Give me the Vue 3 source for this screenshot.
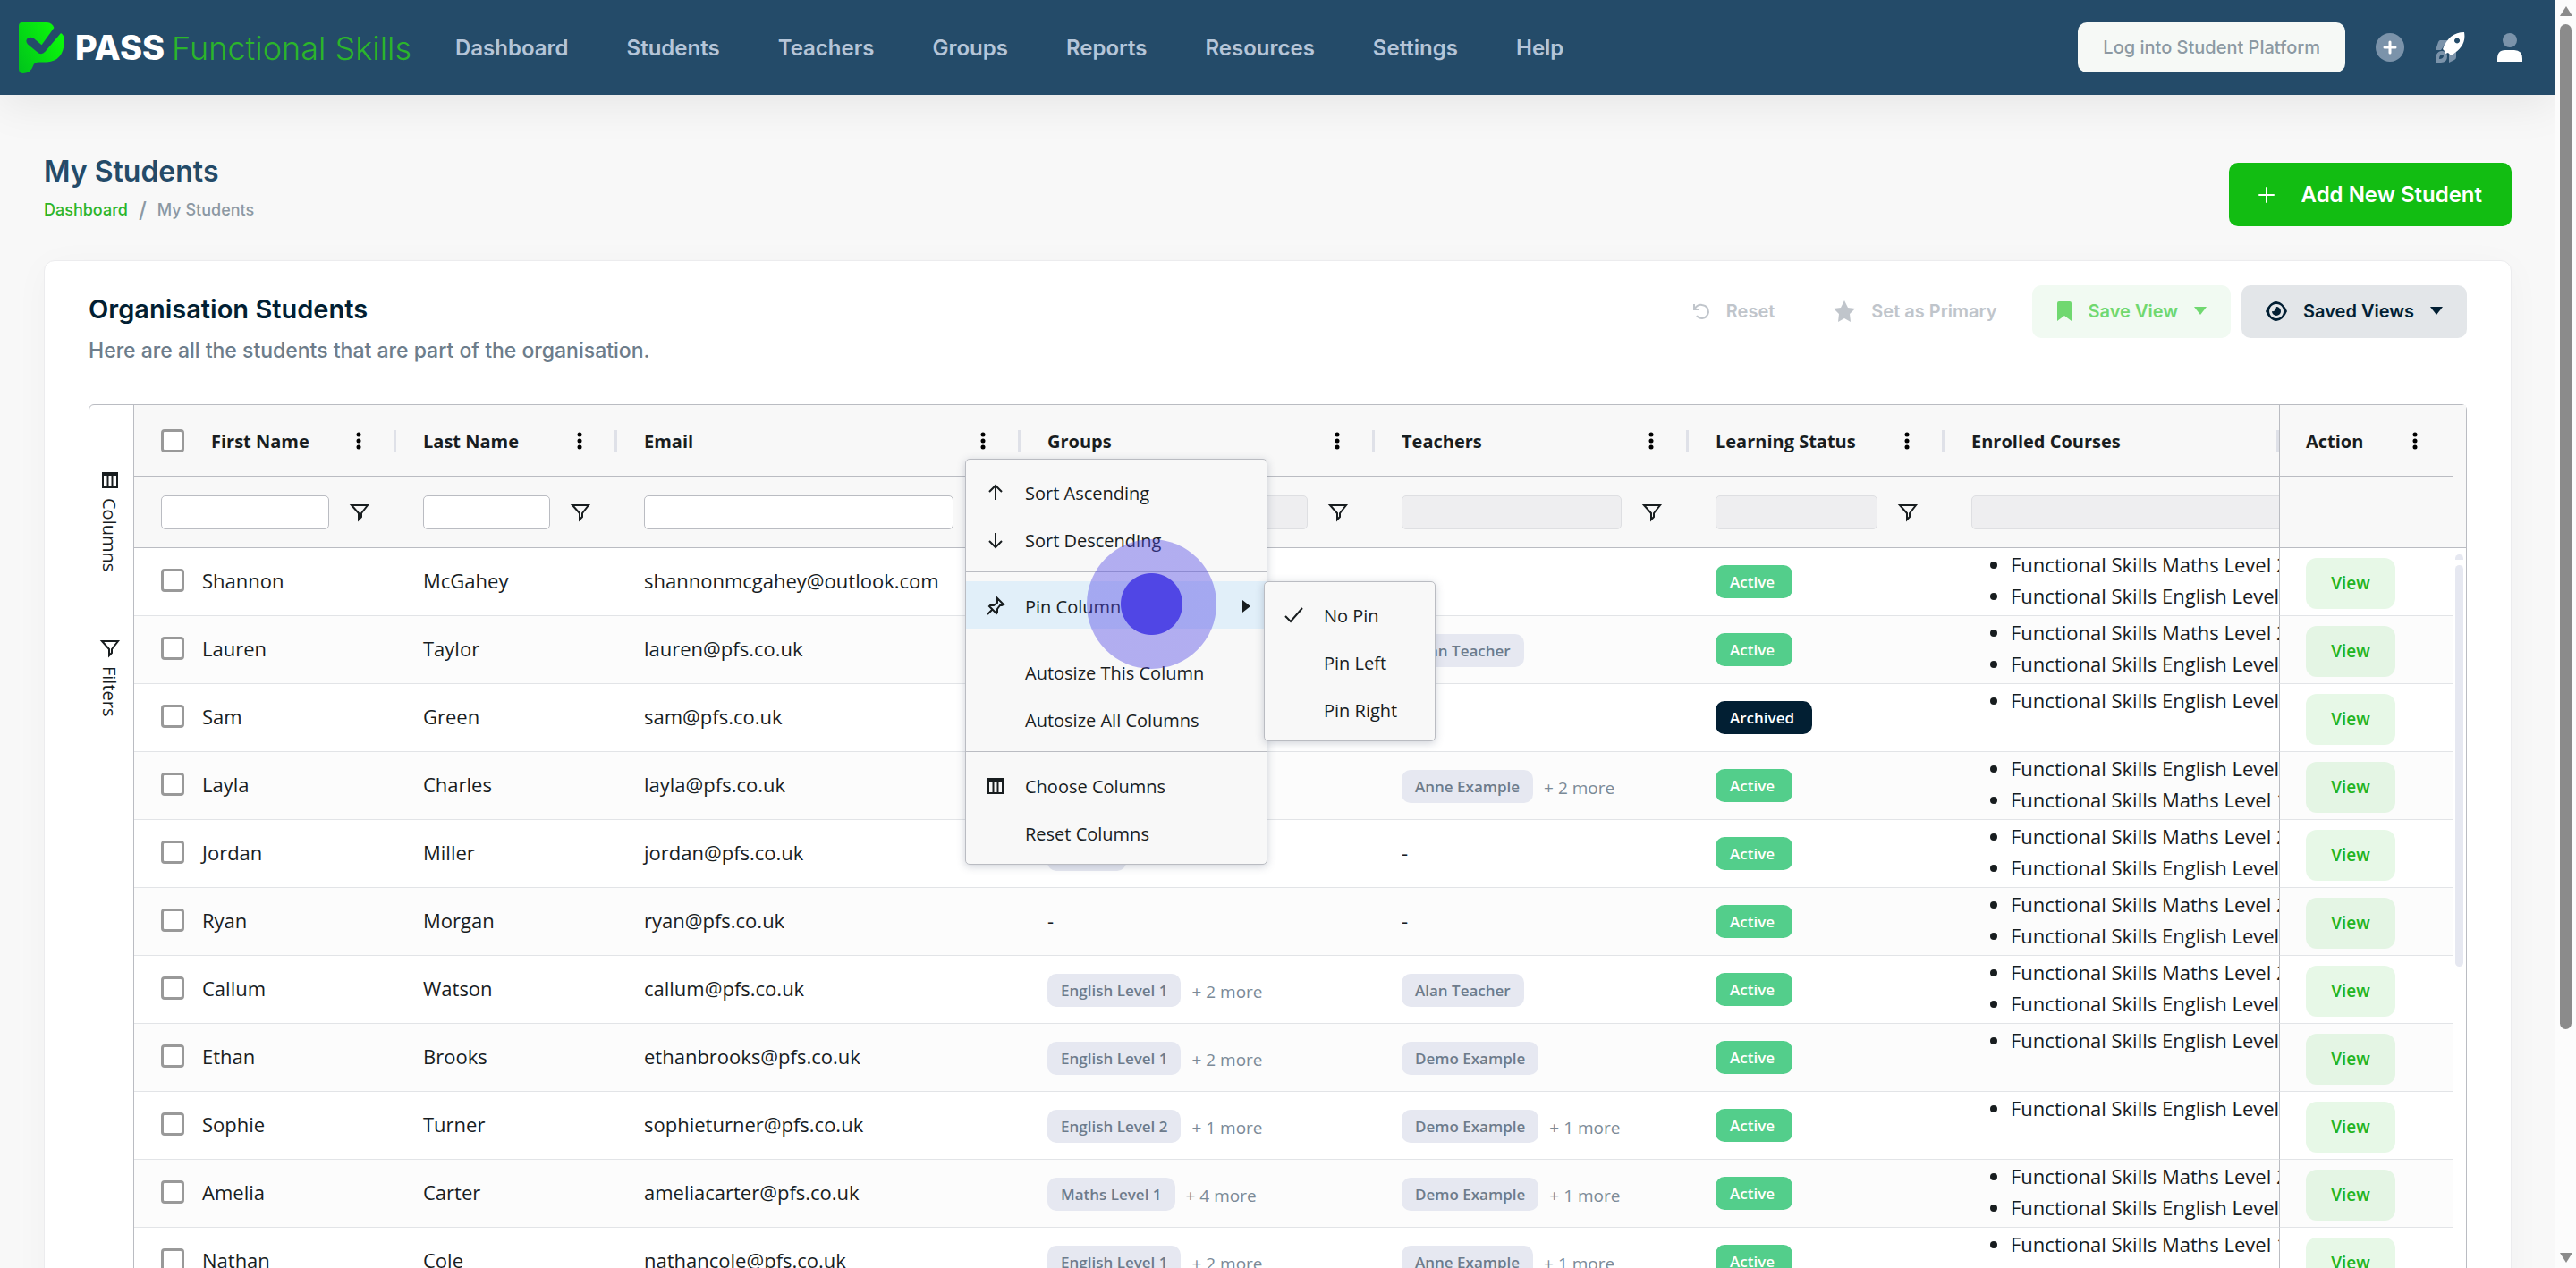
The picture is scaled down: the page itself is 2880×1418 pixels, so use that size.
<script setup>
import { h } from 'vue'

const navItems = ['Dashboard', 'Students', 'Teachers', 'Groups', 'Reports', 'Resources', 'Settings', 'Help']

const columns = [
  { key: 'first', label: 'First Name', filter: 'text', select: true },
  { key: 'last', label: 'Last Name', filter: 'text' },
  { key: 'email', label: 'Email', filter: 'text' },
  { key: 'groups', label: 'Groups', filter: 'set' },
  { key: 'teachers', label: 'Teachers', filter: 'set' },
  { key: 'status', label: 'Learning Status', filter: 'set' },
  { key: 'courses', label: 'Enrolled Courses', filter: 'wide' },
  { key: 'action', label: 'Action', filter: null },
]

const maths2 = 'Functional Skills Maths Level 2'
const maths1 = 'Functional Skills Maths Level 1'
const english = 'Functional Skills English Level 1'

const students = [
  { first: 'Shannon', last: 'McGahey', email: 'shannonmcgahey@outlook.com', group: '', teacher: '', status: 'Active', courses: [maths2, english] },
  { first: 'Lauren', last: 'Taylor', email: 'lauren@pfs.co.uk', group: '', teacher: 'Alan Teacher', status: 'Active', courses: [maths2, english] },
  { first: 'Sam', last: 'Green', email: 'sam@pfs.co.uk', group: '', teacher: '', status: 'Archived', courses: [english] },
  { first: 'Layla', last: 'Charles', email: 'layla@pfs.co.uk', group: '', teacher: 'Anne Example', teacherMore: 2, status: 'Active', courses: [english, maths1] },
  { first: 'Jordan', last: 'Miller', email: 'jordan@pfs.co.uk', group: 'English', teacher: '', status: 'Active', courses: [maths2, english] },
  { first: 'Ryan', last: 'Morgan', email: 'ryan@pfs.co.uk', group: '', teacher: '', status: 'Active', courses: [maths2, english] },
  { first: 'Callum', last: 'Watson', email: 'callum@pfs.co.uk', group: 'English Level 1', groupMore: 2, teacher: 'Alan Teacher', status: 'Active', courses: [maths2, english] },
  { first: 'Ethan', last: 'Brooks', email: 'ethanbrooks@pfs.co.uk', group: 'English Level 1', groupMore: 2, teacher: 'Demo Example', status: 'Active', courses: [english] },
  { first: 'Sophie', last: 'Turner', email: 'sophieturner@pfs.co.uk', group: 'English Level 2', groupMore: 1, teacher: 'Demo Example', teacherMore: 1, status: 'Active', courses: [english] },
  { first: 'Amelia', last: 'Carter', email: 'ameliacarter@pfs.co.uk', group: 'Maths Level 1', groupMore: 4, teacher: 'Demo Example', teacherMore: 1, status: 'Active', courses: [maths2, english] },
  { first: 'Nathan', last: 'Cole', email: 'nathancole@pfs.co.uk', group: 'English Level 1', groupMore: 2, teacher: 'Anne Example', teacherMore: 1, status: 'Active', courses: [maths1] },
]

const menu = [
  [{ label: 'Sort Ascending', icon: 'up' }, { label: 'Sort Descending', icon: 'down' }],
  [{ label: 'Pin Column', icon: 'pin', active: true }],
  [{ label: 'Autosize This Column' }, { label: 'Autosize All Columns' }],
  [{ label: 'Choose Columns', icon: 'columns' }, { label: 'Reset Columns' }],
]

const pinMenu = [{ label: 'No Pin', icon: 'check' }, { label: 'Pin Left' }, { label: 'Pin Right' }]

const iconPaths = {
  up: 'M12 20V4M5 11l7-7 7 7',
  down: 'M12 4v16M5 13l7 7 7-7',
  pin: 'M14 3l7 7-2 1-2 0-3 4 0 4-1 1-8-8 1-1 4 0 4-3 0-2zM9 15l-6 6',
  check: 'M2 13l6 6L21 4',
  columns: 'M4 4h16v16H4zM4 6h16M9.500 5v15M14.500 5v15',
  filter: 'M3 4h18l-7 9v4l-3 3v-7z',
}

const GridIcon = (props) =>
  h('svg', { viewBox: '0 0 24 24', width: 24, height: 24, 'aria-hidden': 'true' }, [
    h('path', { d: iconPaths[props.name], fill: 'none', stroke: 'currentColor', 'stroke-width': 2 }),
  ])
GridIcon.props = ['name']
</script>

<template>
  <div class="shell">
    <div class="page">
      <header class="topbar">
        <a class="brand" href="#">
          <svg class="brand-mark" viewBox="33 44 154 172" aria-hidden="true">
            <defs>
              <linearGradient id="leaf" x1="0" y1="1" x2="1" y2="0.400">
                <stop offset="0" stop-color="#00c21c" />
                <stop offset="1" stop-color="#0bf70b" />
              </linearGradient>
            </defs>
            <path
              fill="url(#leaf)"
              d="M44 44H128Q146 45 152 62L110 120L84 98Q72 91 62 98Q54 107 63 118L100 148Q112 154 122 143L175 80Q188 88 187 108Q184 174 128 178H98Q84 179 81 192Q74 214 48 216Q33 216 33 200V56Q33 44 44 44Z"
            />
          </svg>
          <span class="brand-name"><strong>PASS</strong><span>Functional Skills</span></span>
        </a>
        <nav class="nav">
          <a v-for="item in navItems" :key="item" href="#">{{ item }}</a>
        </nav>
        <div class="tools">
          <button class="login" type="button">Log into Student Platform</button>
          <button class="tool" type="button" aria-label="Add">
            <svg viewBox="0 0 34 34" width="34" height="34">
              <circle cx="17" cy="17" r="16" fill="#7b93aa" />
              <path d="M17 11v12M11 17h12" stroke="#fff" stroke-width="3" stroke-linecap="round" />
            </svg>
          </button>
          <button class="tool" type="button" aria-label="Launch">
            <svg viewBox="0 0 34 34" width="34" height="34">
              <path d="M6 9h9L7 20H1L4 11q1-2 2-2zM24 20v8q0 2-2 3l-6 3v-8z" fill="#7b93aa" />
              <path d="M2 25q2-4 6-4 6 0 6 6 0 7-7 7H1q0-6 1-9zM9 25q-4 0-4 5 5 0 5-4z" fill="#7b93aa" fill-rule="evenodd" />
              <path d="M9 19Q16 0 33 0Q36 16 18 26L15 23L12 24L11 21ZM25 6.500a3 3 0 1 0 .1 0z" fill="#fff" fill-rule="evenodd" />
            </svg>
          </button>
          <button class="tool" type="button" aria-label="Account">
            <svg viewBox="0 0 34 34" width="34" height="34">
              <circle cx="17" cy="9" r="8" fill="#7b93aa" />
              <path d="M3 33v-3q0-10 9-10h10q9 0 9 10v3z" fill="#fff" />
            </svg>
          </button>
        </div>
      </header>

      <main class="content">
        <div class="page-head">
          <div>
            <h1>My Students</h1>
            <div class="crumbs"><a href="#">Dashboard</a><i>/</i><span>My Students</span></div>
          </div>
          <button class="add" type="button">
            <svg viewBox="0 0 18 18" width="18" height="18" aria-hidden="true">
              <path d="M9 1v16M1 9h16" stroke="currentColor" stroke-width="2" stroke-linecap="round" />
            </svg>
            Add New Student
          </button>
        </div>

        <section class="card">
          <div class="card-head">
            <div>
              <h2>Organisation Students</h2>
              <p>Here are all the students that are part of the organisation.</p>
            </div>
            <div class="actions">
              <button class="ghost" type="button">
                <svg viewBox="0 0 20 20" width="20" height="20" aria-hidden="true">
                  <path d="M2 2v6h6M3 7q3-5 8-4 7 1 7 8-1 6-7 7-4 0-6-3" fill="none" stroke="currentColor" stroke-width="2" />
                </svg>
                Reset
              </button>
              <button class="ghost" type="button">
                <svg viewBox="0 0 24 24" width="24" height="24" aria-hidden="true">
                  <path d="M12 0l4 8 8 1-6 6 1 9-7-4-7 4 1-9-6-6 8-1z" fill="currentColor" />
                </svg>
                Set as Primary
              </button>
              <button class="save" type="button">
                <svg viewBox="0 0 16 24" width="18" height="24" aria-hidden="true">
                  <path d="M2 1h12q2 0 2 2v20l-8-6-8 6V3q0-2 2-2z" fill="currentColor" />
                </svg>
                Save View
                <b class="caret"></b>
              </button>
              <button class="views" type="button">
                <svg viewBox="0 0 24 24" width="24" height="24" aria-hidden="true">
                  <path
                    d="M12 1Q20 2 24 12Q20 22 12 23Q4 22 0 12Q4 2 12 1zM12 4a8 8 0 1 0 .1 0zM12 7a5 5 0 1 1-5 5q4 1 5-5z"
                    fill="currentColor"
                    fill-rule="evenodd"
                  />
                </svg>
                Saved Views
                <b class="caret"></b>
              </button>
            </div>
          </div>

          <div class="grid">
            <div class="sidebar">
              <button type="button"><GridIcon name="columns" />Columns</button>
              <button type="button"><GridIcon name="filter" />Filters</button>
            </div>

            <div class="table-box">
              <table>
                <colgroup>
                  <col v-for="c in columns" :key="c.key" :class="'col-' + c.key" />
                </colgroup>
                <thead>
                  <tr>
                    <th v-for="c in columns" :key="c.key" :class="{ pinned: c.key === 'action' }">
                      <div class="head">
                        <input v-if="c.select" class="tick" type="checkbox" aria-label="Select all students" />
                        <span>{{ c.label }}</span>
                        <button v-if="c.key !== 'courses'" class="dots" type="button" :aria-label="c.label + ' menu'">
                          <svg viewBox="0 0 6 20" width="6" height="20">
                            <circle cx="3" cy="3" r="2.500" /><circle cx="3" cy="10" r="2.500" /><circle cx="3" cy="17" r="2.500" />
                          </svg>
                        </button>
                        <i v-if="c.key !== 'action'" class="sep" :class="{ end: c.key === 'courses' }"></i>
                      </div>
                    </th>
                  </tr>
                  <tr class="filters">
                    <td v-for="c in columns" :key="c.key" :class="{ pinned: c.key === 'action' }">
                      <div v-if="c.filter" class="filter" :class="c.filter">
                        <input type="text" :disabled="c.filter !== 'text'" :aria-label="c.label + ' filter'" />
                        <button v-if="c.filter !== 'wide'" type="button" :aria-label="'Open ' + c.label + ' filter'">
                          <GridIcon name="filter" />
                        </button>
                      </div>
                    </td>
                  </tr>
                </thead>
                <tbody>
                  <tr v-for="s in students" :key="s.email">
                    <td class="plain">
                      <label class="name"><input class="tick" type="checkbox" />{{ s.first }}</label>
                    </td>
                    <td class="plain">{{ s.last }}</td>
                    <td class="plain">{{ s.email }}</td>
                    <td :class="{ plain: !s.group }">
                      <div v-if="s.group" class="tags"><span class="tag">{{ s.group }}</span><small v-if="s.groupMore">+ {{ s.groupMore }} more</small></div>
                      <template v-else>-</template>
                    </td>
                    <td :class="{ plain: !s.teacher }">
                      <div v-if="s.teacher" class="tags"><span class="tag">{{ s.teacher }}</span><small v-if="s.teacherMore">+ {{ s.teacherMore }} more</small></div>
                      <template v-else>-</template>
                    </td>
                    <td><span class="status" :class="s.status.toLowerCase()">{{ s.status }}</span></td>
                    <td class="courses"><ul><li v-for="c in s.courses" :key="c">{{ c }}</li></ul></td>
                    <td class="pinned"><button class="view" type="button">View</button></td>
                  </tr>
                </tbody>
              </table>
            </div>

            <div class="gutter">
              <div class="gutter-head"></div>
              <div class="gutter-track"><i class="nub"></i><i class="thumb"></i></div>
            </div>

            <div class="popup column-menu" role="menu">
              <div v-for="(part, i) in menu" :key="i" class="part">
                <button v-for="m in part" :key="m.label" class="item" :class="{ active: m.active }" type="button" role="menuitem">
                  <span class="slot"><GridIcon v-if="m.icon" :name="m.icon" /></span>
                  {{ m.label }}
                  <b v-if="m.active" class="arrow"></b>
                </button>
              </div>
            </div>
            <div class="popup pin-menu" role="menu">
              <button v-for="m in pinMenu" :key="m.label" class="item" type="button" role="menuitem">
                <span class="slot"><GridIcon v-if="m.icon" :name="m.icon" /></span>
                {{ m.label }}
              </button>
            </div>
            <div class="pointer"></div>
          </div>
        </section>
      </main>
    </div>

    <div class="scrollbar" aria-hidden="true">
      <i class="tri up"></i>
      <i class="bar"></i>
      <i class="tri down"></i>
    </div>
  </div>
</template>

<style>
body {
  margin: 0;
  background: #f8f8f8;
}
</style>

<style scoped>
* {
  box-sizing: border-box;
}
.shell {
  display: flex;
  height: 100vh;
  overflow: hidden;
  font-family: Inter, 'Liberation Sans', sans-serif;
}
button {
  border: 0;
  padding: 0;
  background: none;
  font: inherit;
  color: inherit;
  display: flex;
  align-items: center;
}
a {
  text-decoration: none;
}
.page {
  flex: 1;
  min-width: 0;
}

/* Top bar */
.topbar {
  display: flex;
  align-items: center;
  height: 106px;
  padding: 0 34px 0 21px;
  background: #244b69;
  box-shadow: 0 10px 50px rgba(0, 0, 0, 0.08);
}
.brand {
  display: flex;
  align-items: center;
  gap: 12px;
  width: 488px;
}
.brand-mark {
  width: 51px;
  height: 57px;
}
.brand-name {
  display: flex;
  align-items: baseline;
  gap: 8px;
  font-size: 36px;
  font-weight: 300;
  color: #2bb52b;
  white-space: nowrap;
}
.brand-name strong {
  font-size: 38px;
  font-weight: 800;
  color: #fff;
}
.nav {
  display: flex;
  gap: 65px;
  font-size: 24px;
  font-weight: 600;
}
.nav a {
  color: #b5c5d8;
}
.tools {
  display: flex;
  align-items: center;
  gap: 33px;
  margin-left: auto;
}
.login {
  height: 56px;
  padding: 0 28px;
  border-radius: 10px;
  background: #f6f9f6;
  color: #8c99a3;
  font-size: 20px;
  font-weight: 500;
}

/* Page heading */
.content {
  padding: 66px 49px 0;
}
.page-head {
  display: flex;
  justify-content: space-between;
  align-items: flex-start;
  padding-bottom: 38px;
}
h1,
h2,
p {
  margin: 0;
}
h1 {
  font-size: 32px;
  line-height: 40px;
  font-weight: 600;
  color: #244b69;
}
.crumbs {
  display: flex;
  align-items: center;
  gap: 12px;
  margin-top: 8px;
  line-height: 30px;
  font-size: 18px;
  font-weight: 500;
  color: #8c98a3;
}
.crumbs a {
  color: #2bb52b;
}
.crumbs i {
  font-size: 24px;
  font-style: normal;
}
.add {
  gap: 30px;
  height: 71px;
  margin-top: 10px;
  padding: 0 33px;
  border-radius: 10px;
  background: #12bd12;
  color: #fff;
  font-size: 24px;
  font-weight: 600;
}

/* Card */
.card {
  padding: 27px 49px 0;
  border: 1px solid #ececee;
  border-radius: 12px;
  background: #fff;
  box-shadow: 0 6px 40px rgba(0, 0, 0, 0.03);
}
.card-head {
  display: flex;
  justify-content: space-between;
  align-items: flex-start;
  height: 133px;
}
h2 {
  margin-top: 7px;
  font-size: 29px;
  line-height: 40px;
  font-weight: 600;
  color: #021f33;
}
p {
  margin-top: 11px;
  font-size: 23px;
  line-height: 30px;
  font-weight: 500;
  color: #6d7d8b;
}
.actions {
  display: flex;
  font-size: 20px;
  font-weight: 600;
}
.actions button {
  height: 59px;
  padding-bottom: 2px;
  border-radius: 10px;
}
.ghost {
  gap: 18px;
  margin-right: 66px;
  color: #c0c5cb;
}
.ghost + .ghost {
  margin-right: 39px;
}
.save,
.views {
  gap: 18px;
  padding: 0 27px;
  background: #f1faf2;
  color: #70d870;
}
.views {
  margin-left: 12px;
  background: #e3e6e9;
  color: #021f33;
}
.caret {
  border: 7px solid transparent;
  border-top: 9px solid currentColor;
  border-bottom: 0;
}

/* Grid */
.grid {
  position: relative;
  display: flex;
  border: 1px solid #babcc2;
  border-radius: 6px 6px 0 0;
  font-family: 'Open Sans', 'Noto Sans', sans-serif;
  font-size: 22px;
  color: #181d1f;
}
.sidebar {
  display: flex;
  flex-direction: column;
  gap: 74px;
  width: 50px;
  padding-top: 72px;
  border-right: 1px solid #babcc2;
}
.sidebar button {
  gap: 8px;
  width: 45px;
  writing-mode: vertical-rl;
  font-size: 20px;
}
.table-box {
  flex: 1;
  min-width: 0;
}
table {
  width: 100%;
  table-layout: fixed;
  border-collapse: separate;
  border-spacing: 0;
}
.col-first {
  width: 293px;
}
.col-last {
  width: 247px;
}
.col-email {
  width: 451px;
}
.col-groups {
  width: 396px;
}
.col-teachers {
  width: 351px;
}
.col-status {
  width: 286px;
}
.col-action {
  width: 195px;
}
th,
td {
  overflow: hidden;
  height: 76px;
  padding: 0 0 0 30px;
  border-bottom: 1px solid #e2e4e7;
  text-align: left;
  white-space: nowrap;
}
th,
.filters td {
  height: 80px;
  border-bottom-color: #babcc2;
  background: #f8f8f8;
}
td.plain {
  padding-bottom: 3px;
}
.pinned {
  padding-left: 29px;
  border-left: 1px solid #babcc2;
}
tbody tr:nth-child(even) {
  background: #fcfcfc;
}
.head {
  display: flex;
  align-items: center;
  font-size: 20px;
}
.head span {
  padding-top: 2px;
}
.head .tick {
  margin-right: 30px;
}
.dots {
  justify-content: center;
  width: 24px;
  height: 30px;
  margin: 0 27px 0 auto;
}
.sep {
  width: 3px;
  height: 24px;
  background: #dfe1e8;
}
.sep.end {
  margin-left: auto;
}
.pinned .dots {
  margin-right: 31px;
}
.tick {
  appearance: none;
  width: 26px;
  height: 26px;
  margin: 0;
  border: 3px solid #999;
  border-radius: 4px;
  background: #fff;
}
.filter {
  display: flex;
  align-items: center;
}
.filter input {
  flex: 1;
  min-width: 0;
  height: 38px;
  border: 1px solid #babcc2;
  border-radius: 5px;
  background: #fff;
}
.filter input:disabled {
  border-color: #dedfe2;
  background: #eeeef0;
}
.filter.wide {
  margin-right: -20px;
}
.filter button {
  margin: 0 29px 0 22px;
}
.name {
  display: flex;
  align-items: center;
  gap: 20px;
}
.tags {
  display: flex;
  align-items: center;
  gap: 12px;
}
.tags small {
  padding-top: 4px;
  font-size: 19px;
  color: #7b8a97;
}
.tag,
.status {
  display: inline-block;
  height: 37px;
  padding: 0 15px;
  border-radius: 10px;
  font-size: 17px;
  line-height: 37px;
  font-weight: 600;
}
.tag {
  margin-top: 2px;
  background: #e6e8f1;
  color: #6d7b8b;
}
.status {
  padding: 0 20px 0 16px;
  vertical-align: middle;
  color: #fff;
}
.status.active {
  background: #53ce8b;
}
.status.archived {
  background: #021f33;
}
.courses {
  vertical-align: top;
}
ul {
  margin: 0;
  padding: 1px 0 0 44px;
}
li {
  line-height: 35px;
}
.view {
  justify-content: center;
  width: 100px;
  height: 57px;
  margin-top: 3px;
  border-radius: 12px;
  background: rgba(18, 189, 18, 0.1);
  color: #22b422;
  font-size: 19px;
  font-weight: 600;
}
.gutter {
  width: 14px;
}
.gutter-head {
  height: 160px;
  border-bottom: 1px solid #babcc2;
  background: #f8f8f8;
}
.gutter-track {
  display: flex;
  flex-direction: column;
  gap: 6px;
  width: 9px;
  margin-left: 2px;
  padding-top: 7px;
}
.nub {
  height: 6px;
  border-radius: 5px 5px 0 0;
  background: #e6e8f1;
}
.thumb {
  height: 449px;
  border-radius: 5px;
  background: #e6e8f1;
}

/* Column menu */
.popup {
  position: absolute;
  padding: 9px 0;
  border: 1px solid #babcc2;
  border-radius: 5px;
  background: #f8f8f8;
  box-shadow: 0 2px 10px rgba(60, 70, 100, 0.25);
  font-size: 20px;
}
.column-menu {
  top: 60px;
  left: 979px;
  width: 338px;
}
.pin-menu {
  top: 197px;
  left: 1313px;
  width: 192px;
}
.part + .part {
  margin-top: 10px;
  padding-top: 10px;
  border-top: 1px solid #babcc2;
}
.item {
  width: 100%;
  height: 53px;
  padding-top: 3px;
}
.item.active {
  background: #e1eff9;
}
.slot {
  display: flex;
  justify-content: center;
  width: 66px;
}
.arrow {
  margin: 0 18px 0 auto;
  border: 7px solid transparent;
  border-left: 9px solid currentColor;
  border-right: 0;
}
.pointer {
  position: absolute;
  top: 150px;
  left: 1115px;
  width: 145px;
  height: 145px;
  border-radius: 50%;
  background: radial-gradient(circle, #5046e5 34px, rgba(80, 70, 229, 0.42) 35px);
}

/* Window scrollbar */
.scrollbar {
  display: flex;
  flex-direction: column;
  align-items: center;
  width: 23px;
  padding: 7px 0 6px;
  background: #fcfcfc;
}
.bar {
  width: 13px;
  height: 80%;
  margin: 9px 0 auto;
  border-radius: 7px;
  background: #8b8b8b;
}
.tri {
  border: 7px solid transparent;
}
.tri.up {
  border-top: 0;
  border-bottom: 11px solid #8b8b8b;
}
.tri.down {
  border-bottom: 0;
  border-top: 11px solid #8b8b8b;
}
</style>
